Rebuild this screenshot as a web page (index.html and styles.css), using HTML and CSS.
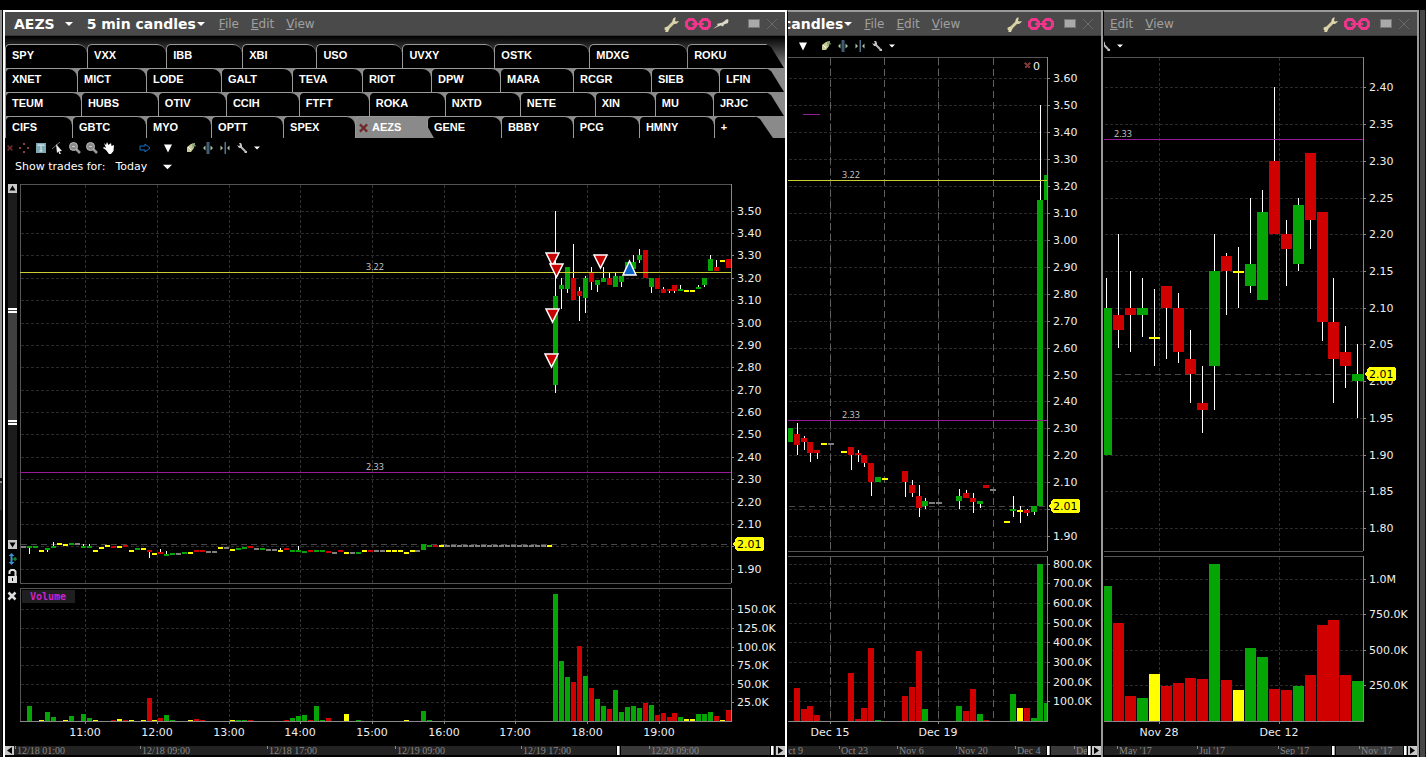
FILE: index.html
```
<!DOCTYPE html>
<html lang="en">
<head>
    <meta charset="UTF-8">
    <meta name="viewport" content="width=device-width, initial-scale=1.0">
    <title>AEZS Charts</title>
    <link rel="stylesheet" href="styles.css">
</head>
<body>
    <!-- Icon sprites -->
    <svg class="sprites" aria-hidden="true">
        <symbol id="caret" viewBox="0 0 8 4"><path d="M0 0h8L4 4z" fill="#fff"/></symbol>
        <symbol id="down" viewBox="0 0 10 9"><path d="M1 1h8L5 9z" fill="#fff"/></symbol>
        <symbol id="wrench" viewBox="0 0 16 16">
            <path d="M1.5 14.5L10 6" stroke="#d8d0a0" stroke-width="3" fill="none"/>
            <path d="M10.5 1.5C8 3 8 6 9.500 7.500c1.500 1 4 .5 5.500-2.500l-3 .5-1-1 .8-3z" fill="#ddd6ac"/>
            <path d="M0 12l3-1.500 2.500 2L4 16H1l1.500-2z" fill="#ddd6ac"/>
        </symbol>
        <symbol id="chain" viewBox="0 0 26 12">
            <g fill="none" stroke="#f0358c" stroke-width="3">
                <path d="M4 1.500h4l2.500 2.500v4L8 10.500H4L1.500 8V4z"/>
                <path d="M18 1.500h4l2.500 2.500v4l-2.500 2.500h-4L15.500 8V4z"/>
                <path d="M7 6h12" stroke-width="2"/>
            </g>
        </symbol>
        <symbol id="pin" viewBox="0 0 16 12">
            <path d="M0 11l5-4-1.500-1 6-1.500L14 1l1.500 1-.5 3-4 1.500-1 2-2-1-3 1z" fill="#ddd8c8"/>
        </symbol>
        <symbol id="restore" viewBox="0 0 12 9"><path d="M0 0h12v9H0z" fill="#777"/><path d="M1 1h10v7H1z" fill="#aaa"/></symbol>
        <symbol id="close" viewBox="0 0 12 12"><path d="M1 1l10 10M11 1L1 11" stroke="#6a6a6a" fill="none"/></symbol>
        <symbol id="redx" viewBox="0 0 10 10"><path d="M1 1l8 8M9 1L1 9" stroke="#6e2a2a" stroke-width="2.500" fill="none"/></symbol>
        <symbol id="dots" viewBox="0 0 10 10"><path d="M4 0h2v2H4zM0 4h2v2H0zM8 4h2v2H8zM4 8h2v2H4z" fill="#8a4040"/></symbol>
        <symbol id="textbox" viewBox="0 0 10 10"><path d="M0 0h10v10H0z" fill="#7fa9b3"/><path d="M2 3V2h6v1M5 2v6M3.500 8h3" stroke="#dfeef2" fill="none"/></symbol>
        <symbol id="draw" viewBox="0 0 12 12"><path d="M0 7l8-7" stroke="#777" fill="none"/><path d="M4 2l6 7-2.500.2L9 12l-1.500.4L6.500 9.500 5 11z" fill="#eee"/></symbol>
        <symbol id="zoom" viewBox="0 0 12 12"><path d="M7 7l4 4" stroke="#999" stroke-width="2.500" fill="none"/><circle cx="4.500" cy="4.500" r="4" fill="#8a8a8a" stroke="#bbb"/><path d="M3 4.500h3" stroke="#ccc" fill="none"/></symbol>
        <symbol id="hand" viewBox="0 0 12 12"><path d="M1 1l2 2 1-3 1.500 3L8 1l.5 3L11 3l-.5 6-2.500 3H6L3 8 0 6l1-1 2 1z" fill="#fff"/></symbol>
        <symbol id="arrow" viewBox="0 0 12 10"><path d="M1 3h5V1l5 4-5 4V7H1z" stroke="#1d6fc4" fill="none"/></symbol>
        <symbol id="leaf" viewBox="0 0 10 10"><path d="M1 4l4-3 4-1-1 5-3 4-4 0z" fill="#c9c99a"/><path d="M6 2l4 1M7 0v5" stroke="#7f9f6a" fill="none"/><path d="M2 4l3 3" stroke="#fff" fill="none"/></symbol>
        <symbol id="widen" viewBox="0 0 10 12"><path d="M3.500 0h3v12h-3z" fill="#3f5d70"/><path d="M0 6l2.500-2.500v5zM10 6L7.500 3.500v5z" fill="#a9c4a4"/></symbol>
        <symbol id="narrow" viewBox="0 0 10 12"><path d="M4.500 0h1.500v12H4.500z" fill="#4f748a"/><path d="M3 6L.5 3.500v5zM7 6l2.500-2.500v5z" fill="#a9c4a4"/></symbol>
        <symbol id="spanner" viewBox="0 0 10 10"><path d="M3 3l5 5" stroke="#bbb" stroke-width="2" fill="none"/><path d="M0 2l2 1 1-1-1-2h2l1 2v2L4 5H2zM10 8L8 7.500 7 9l1 1h2z" fill="#c4c4c4"/></symbol>
        <symbol id="scale" viewBox="0 0 9 12"><path d="M3.500 0l3 3h-2v6h2l-3 3-3-3h2V3h-2z" fill="#3f8fd0"/><path d="M4 6h5M7 4v4" stroke="#1fa84a" fill="none"/></symbol>
        <symbol id="lock" viewBox="0 0 9 14"><path d="M1.500 5V2.500l1.500-1.500h3l1.500 1.500V8" stroke="#ddd" stroke-width="2" fill="none"/><path d="M0 7h9v7H0z" fill="#ddd"/><path d="M4 9h1v3H4z" fill="#000"/></symbol>
        <symbol id="cross" viewBox="0 0 10 10"><path d="M1.500 1.500l7 7M8.500 1.500l-7 7" stroke="#ddd" stroke-width="2.500" fill="none"/></symbol>
    </svg>

    <div class="behind"></div>

    <!-- 5 min chart -->
    <section class="window active">
        <header class="titlebar">
            <button class="title symbol">AEZS <svg class="i-caret"><use href="#caret"/></svg></button>
            <button class="title period">5 min candles<svg class="i-caret"><use href="#caret"/></svg></button>
            <nav class="menu">
                <button><u>F</u>ile</button>
                <button><u>E</u>dit</button>
                <button><u>V</u>iew</button>
            </nav>
            <div class="controls">
                <button aria-label="Settings"><svg class="i-16"><use href="#wrench"/></svg></button>
                <button aria-label="Link"><svg class="i-chain"><use href="#chain"/></svg></button>
                <button class="pin" aria-label="Pin"><svg class="i-pin"><use href="#pin"/></svg></button>
                <button class="restore" aria-label="Restore"><svg class="i-restore"><use href="#restore"/></svg></button>
                <button aria-label="Close"><svg class="i-12"><use href="#close"/></svg></button>
            </div>
        </header>

        <div class="tabs" id="tabs"></div>

        <div class="toolbar">
            <button class="small" aria-label="Remove"><svg class="i-tiny"><use href="#redx"/></svg></button>
            <button aria-label="Crosshair"><svg class="i-10"><use href="#dots"/></svg></button>
            <button aria-label="Text"><svg class="i-10"><use href="#textbox"/></svg></button>
            <button aria-label="Draw"><svg class="i-12"><use href="#draw"/></svg></button>
            <button aria-label="Zoom in"><svg class="i-12"><use href="#zoom"/></svg></button>
            <button aria-label="Zoom out"><svg class="i-12"><use href="#zoom"/></svg></button>
            <button aria-label="Pan"><svg class="i-12"><use href="#hand"/></svg></button>
            <button class="gap-wide" aria-label="Forward"><svg class="i-12"><use href="#arrow"/></svg></button>
            <button class="gap" aria-label="More"><svg class="i-10"><use href="#down"/></svg></button>
            <button class="gap" aria-label="Colors"><svg class="i-10"><use href="#leaf"/></svg></button>
            <button aria-label="Widen bars"><svg class="i-12"><use href="#widen"/></svg></button>
            <button aria-label="Narrow bars"><svg class="i-12"><use href="#narrow"/></svg></button>
            <button aria-label="Tools"><svg class="i-10"><use href="#spanner"/></svg></button>
            <button class="small" aria-label="Tool list"><svg class="i-arrow"><use href="#caret"/></svg></button>
        </div>

        <div class="trades">
            <label for="trades">Show trades for:</label>
            <select id="trades"><option>Today</option></select>
            <svg class="i-drop"><use href="#caret"/></svg>
        </div>

        <div class="workspace">
            <div class="rail">
                <div class="scroller">
                    <button aria-label="Scroll up"><svg viewBox="0 0 9 9"><path d="M1.500 6.500h6l-3-5z"/></svg></button>
                    <div class="track"><div class="thumb"></div></div>
                    <button aria-label="Scroll down"><svg viewBox="0 0 9 9"><path d="M1.500 2.500h6l-3 5z"/></svg></button>
                </div>
                <div class="rail-tools">
                    <button aria-label="Auto scale"><svg class="i-scale"><use href="#scale"/></svg></button>
                    <button aria-label="Lock scale"><svg class="i-lock"><use href="#lock"/></svg></button>
                    <button aria-label="Remove volume"><svg class="i-10"><use href="#cross"/></svg></button>
                </div>
            </div>
            <svg class="chart" id="chart-5min"></svg>
        </div>

        <div class="timebar">
            <button aria-label="Back"><svg viewBox="0 0 9 9"><path d="M7 1v7L2 4.500z"/></svg></button>
            <svg class="timeline" id="time-5min"></svg>
            <button aria-label="Forward"><svg viewBox="0 0 9 9"><path d="M2 1v7l5-3.500z"/></svg></button>
        </div>
    </section>

    <!-- Hourly chart -->
    <section class="window hourly">
        <header class="titlebar">
            <button class="title period">candles<svg class="i-caret"><use href="#caret"/></svg></button>
            <nav class="menu">
                <button><u>F</u>ile</button>
                <button><u>E</u>dit</button>
                <button><u>V</u>iew</button>
            </nav>
            <div class="controls">
                <button aria-label="Settings"><svg class="i-16"><use href="#wrench"/></svg></button>
                <button aria-label="Link"><svg class="i-chain"><use href="#chain"/></svg></button>
                <button class="restore" aria-label="Restore"><svg class="i-restore"><use href="#restore"/></svg></button>
                <button aria-label="Close"><svg class="i-12"><use href="#close"/></svg></button>
            </div>
        </header>
        <div class="toolbar">
            <button aria-label="More"><svg class="i-10"><use href="#down"/></svg></button>
            <button class="gap" aria-label="Colors"><svg class="i-10"><use href="#leaf"/></svg></button>
            <button aria-label="Widen bars"><svg class="i-12"><use href="#widen"/></svg></button>
            <button aria-label="Narrow bars"><svg class="i-12"><use href="#narrow"/></svg></button>
            <button aria-label="Tools"><svg class="i-10"><use href="#spanner"/></svg></button>
            <button class="small" aria-label="Tool list"><svg class="i-arrow"><use href="#caret"/></svg></button>
        </div>
        <div class="workspace">
            <svg class="chart" id="chart-hour"></svg>
        </div>
        <div class="timebar">
            <svg class="timeline" id="time-hour"></svg>
            <button aria-label="Forward"><svg viewBox="0 0 9 9"><path d="M2 1v7l5-3.500z"/></svg></button>
        </div>
    </section>

    <!-- Daily chart -->
    <section class="window daily">
        <header class="titlebar">
            <nav class="menu">
                <button><u>E</u>dit</button>
                <button><u>V</u>iew</button>
            </nav>
            <div class="controls">
                <button aria-label="Settings"><svg class="i-16"><use href="#wrench"/></svg></button>
                <button aria-label="Link"><svg class="i-chain"><use href="#chain"/></svg></button>
                <button class="restore" aria-label="Restore"><svg class="i-restore"><use href="#restore"/></svg></button>
                <button aria-label="Close"><svg class="i-12"><use href="#close"/></svg></button>
            </div>
        </header>
        <div class="toolbar">
            <button aria-label="Tools"><svg class="i-10"><use href="#spanner"/></svg></button>
            <button class="small" aria-label="Tool list"><svg class="i-arrow"><use href="#caret"/></svg></button>
        </div>
        <div class="workspace">
            <svg class="chart" id="chart-day"></svg>
        </div>
        <div class="timebar">
            <svg class="timeline" id="time-day"></svg>
            <button aria-label="Forward"><svg viewBox="0 0 9 9"><path d="M2 1v7l5-3.500z"/></svg></button>
        </div>
    </section>

    <div class="edge"></div>

    <script src="script.js"></script>
</body>
</html>
```
FILE: styles.css
```
* { box-sizing: border-box; }

body {
    display: grid;
    grid-template-columns: 3px minmax(0, 784fr) minmax(0, 316fr) minmax(0, 316fr) 7px;
    min-height: 100vh;
    margin: 0;
    padding-top: 10px;
    background: #000;
    color: #fff;
    font: 11px/14px "DejaVu Sans", Verdana, sans-serif;
}

button, select {
    margin: 0;
    padding: 0;
    border: 0;
    background: none;
    color: inherit;
    font: inherit;
    cursor: pointer;
}
button svg { display: block; }
.sprites { position: absolute; width: 0; height: 0; }

/* Window frames */
.behind {
    border-right: 1px solid #000;
    background: linear-gradient(#8d8d8d 0 468px, #111 468px 471px, #888 471px 473px, #333 473px 500px, #181818 500px);
}
.edge {
    margin-left: 1px;
    border-right: 1px solid #111;
    background: #464646;
}
.window {
    display: flex;
    flex-direction: column;
    min-width: 0;
    padding-bottom: 2px;
    overflow: hidden;
    border-top: 2px solid #999;
    border-right: 2px solid #999;
    border-left: 1px solid #000;
}
.window.active {
    border-color: #fff;
    border-left-width: 2px;
}

/* Title bar */
.titlebar {
    display: flex;
    align-items: center;
    height: 24px;
    border-bottom: 1px solid #383838;
    background: #4a4a4a;
    white-space: nowrap;
}
.title {
    display: flex;
    align-items: center;
    font-size: 14px;
    font-weight: bold;
}
.symbol { gap: 10px; margin-left: 9px; }
.period { gap: 1px; margin-left: 14px; }
.hourly .period { margin-left: -5px; }
.menu {
    display: flex;
    gap: 12px;
    margin-left: 14px;
    color: #a0a0a0;
    font-size: 12px;
}
.hourly .menu { margin-left: 12px; }
.daily .menu { margin-left: 6px; }
.controls {
    display: flex;
    align-items: center;
    gap: 5px;
    margin-left: auto;
    padding-right: 7px;
}
.controls .restore { margin: 0 1px 0 5px; }
.controls .pin { margin-left: -3px; }
.controls .pin + .restore { margin-left: 14px; }

.i-caret { width: 8px; height: 4px; }
.i-arrow { width: 6px; height: 4px; }
.i-drop { width: 9px; height: 6px; }
.i-tiny { width: 6px; height: 6px; }
.i-10 { width: 10px; height: 10px; }
.i-12 { width: 12px; height: 12px; }
.i-16 { width: 16px; height: 16px; }
.i-chain { width: 26px; height: 12px; }
.i-pin { width: 16px; height: 12px; }
.i-restore { width: 12px; height: 9px; }
.i-scale { width: 9px; height: 12px; }
.i-lock { width: 9px; height: 14px; }

/* Ticker tabs */
.tabs {
    padding-top: 8px;
    background: linear-gradient(#000, #888 32px);
}
.tab-row {
    display: flex;
    height: 24px;
    padding-right: 1px;
}
.tab-row + .tab-row { background: #8a8a8a; }
.tab-row:last-child { height: 22px; padding-right: 12px; }
.tab {
    display: flex;
    flex: 1 1 0;
    min-width: 0;
    border-top: 1px solid #999;
    border-left: 1px solid #999;
    border-radius: 5px 9px 0 0;
    background: #000;
    font: bold 11px/13px "Liberation Sans", Arial, sans-serif;
}
.tab span {
    display: flex;
    gap: 4px;
    padding: 4px 0 0 6px;
}
.tab:last-child {
    clip-path: polygon(0 0, calc(100% - 18px) 0, calc(100% - 13px) 3px, 100% 100%, 0 100%);
}
.tab.current {
    z-index: 1;
    margin-right: -7px;
    background: #8a8a8a;
    clip-path: polygon(0 0, calc(100% - 18px) 0, calc(100% - 10px) 4px, 100% 100%, 0 100%);
}
.tab.current span { padding-left: 3px; }
.tab svg { width: 9px; height: 10px; margin-top: 2px; }

/* Toolbars */
.toolbar {
    display: flex;
    align-items: center;
    gap: 5px;
    height: 21px;
    padding: 0 0 2px 1px;
}
.toolbar button {
    display: grid;
    place-items: center;
    width: 12px;
}
.toolbar .small { width: 7px; }
.toolbar .gap { margin-left: 6px; }
.toolbar .gap-wide { margin-left: 19px; }
.hourly .toolbar { padding-left: 9px; }
.daily .toolbar button:first-child { margin-left: -6px; }
.trades {
    display: flex;
    align-items: center;
    height: 25px;
    padding: 0 0 9px 10px;
}
.trades select {
    margin: 0 16px 0 10px;
    appearance: none;
}

/* Charts */
.workspace {
    display: flex;
    flex: 1;
    min-height: 300px;
}
.chart {
    display: block;
    flex: 1;
    min-width: 0;
    height: auto;
}
.chart text { font: 11px "DejaVu Sans", Verdana, sans-serif; fill: #eee; }
.chart .level { font: 9px "Open Sans", Tahoma, sans-serif; fill: #ccc; }
.chart .last { fill: #000; }
.chart .study { font: bold 10px "DejaVu Sans Mono", monospace; fill: #cc22cc; }

.rail {
    display: flex;
    flex-direction: column;
    width: 9px;
    margin: 0 3px;
}
.scroller {
    display: flex;
    flex: 365 1 0;
    flex-direction: column;
}
.scroller button, .timebar button { flex: none; width: 9px; height: 9px; background: #c8c8c8; }
.track {
    display: flex;
    flex: 1;
    align-items: center;
    background: #1c1c1c;
}
.thumb {
    width: 100%;
    height: 34%;
    border-top: 5px double #fff;
    border-bottom: 5px double #fff;
    background: #404040;
}
.rail-tools {
    display: flex;
    flex: 193 1 0;
    flex-direction: column;
    gap: 4px;
    padding-top: 4px;
}
.rail-tools button:last-child { margin-top: 4px; margin-left: -1px; }

.timebar { display: flex; height: 9px; }
.timeline {
    display: block;
    flex: 1;
    min-width: 0;
    height: 9px;
    background: #232323;
}
.timeline text { font: 10px "Liberation Serif", "Times New Roman", serif; fill: #888; }
```
FILE: script.js
```
const COLORS = { g: '#05a505', r: '#d00000', y: '#ffff00', w: '#808080' };
const YELLOW = '#cccc33';
const PURPLE = '#991a99';

// Tab rows: ticker and relative width
const TABS = [
    [['SPY', 82], ['VXX', 79], ['IBB', 76], ['XBI', 74], ['USO', 86], ['UVXY', 92], ['OSTK', 95], ['MDXG', 98], ['ROKU', 97]],
    [['XNET', 72], ['MICT', 69], ['LODE', 75], ['GALT', 71], ['TEVA', 70], ['RIOT', 69], ['DPW', 69], ['MARA', 73], ['RCGR', 78], ['SIEB', 68], ['LFIN', 65]],
    [['TEUM', 76], ['HUBS', 77], ['OTIV', 68], ['CCIH', 73], ['FTFT', 70], ['ROKA', 76], ['NXTD', 75], ['NETE', 75], ['XIN', 60], ['MU', 58], ['JRJC', 71]],
    [['CIFS', 67], ['GBTC', 74], ['MYO', 65], ['OPTT', 72], ['SPEX', 72], ['AEZS', 79], ['GENE', 74], ['BBBY', 72], ['PCG', 66], ['HMNY', 75], ['+', 59]]
];

document.getElementById('tabs').innerHTML = TABS.map(row =>
    '<div class="tab-row">' + row.map(([name, grow]) => {
        const current = name === 'AEZS';
        return `<button class="tab${current ? ' current' : ''}" style="flex-grow:${grow}"><span>` +
            (current ? '<svg><use href="#redx"/></svg>' : '') + `${name}</span></button>`;
    }).join('') + '</div>'
).join('');

// Quiet session bars: color, price, volume (K), wick end
const quiet = [
    ['w', 2.0], ['g', 2.003, 20.6, 1.967], ['g', 2.0], ['y', 1.985, 1.5], ['g', 1.994, 12.5, 1.976], ['g', 2.0, 5.8, 2.021],
    ['y', 2.016], ['y', 2.011, 1.5], ['g', 2.016, 7], ['w', 2.016], ['g', 2.0, 10, 2.011], ['g', 2.0, 4.5, 2.011],
    ['y', 1.985, 1.5], ['y', 1.999], ['y', 2.007], ['r', 2.0, 1.5], ['y', 2.003, 3], ['r', 2.007, 1.5], ['y', 1.985, 1.5, 1.976],
    ['g', 1.994], ['y', 1.994, 1.5], ['r', 1.985, 31, 1.949], ['y', 1.971, 1.5], ['r', 1.976, 4.5, 1.989], ['g', 1.967, 8.5, 1.98],
    ['g', 1.971, 1.5], ['w', 1.971], ['g', 1.976], ['y', 1.976, 1.5], ['r', 1.985, 3], ['r', 1.985, 1.5], ['w', 1.98], ['w', 1.98],
    ['y', 1.999], ['w', 1.999], ['y', 1.99, 1.5], ['g', 1.994, 1.5], ['g', 1.998, 1.5], ['r', 2.0, 1.5], ['w', 1.994], ['g', 1.991],
    ['w', 1.99], ['w', 1.99], ['y', 1.985, 0, 1.994], ['r', 1.994, 1.5], ['g', 1.985, 4.5], ['g', 1.985, 7, 2.003], ['g', 1.98, 8.5],
    ['r', 1.985, 1.5], ['g', 1.985, 20.6, 1.976], ['g', 1.985, 1.5], ['r', 1.98, 4.5], ['w', 1.976], ['r', 1.985], ['y', 1.976, 10],
    ['w', 1.976], ['g', 1.976, 1.5], ['y', 1.985], ['r', 1.985], ['w', 1.985], ['w', 1.985], ['y', 1.985], ['y', 1.985], ['y', 1.985],
    ['y', 1.976, 1.5], ['y', 1.985], ['w', 1.985]
].map(([c, p, vol, wick]) => [c, p, p, Math.max(p, wick || p), Math.min(p, wick || p), vol]);

const flat = Array.from({ length: 17 }, () => ['w', 2.007, 2.007]);

// Candles: color, body top, body bottom, high, low, volume (K)
const fiveMin = quiet.concat([
    ['g', 2.01, 1.985, 0, 0, 14], ['g', 2.007, 2.007, 2.007, 1.999, 1.5], ['r', 2.007, 2.007], ['y', 2.007, 2.007]
], flat, [
    ['y', 2.007, 2.007],
    ['g', 3.12, 2.72, 3.5, 2.685, 171], ['g', 3.17, 3.15, 3.2, 3.06, 81], ['g', 3.25, 3.15, 0, 3.13, 59.6], ['r', 3.2, 3.1, 3.35, 0, 53],
    ['r', 3.14, 3.12, 3.16, 3.005, 101], ['g', 3.2, 3.11, 3.21, 3.045, 61], ['r', 3.22, 3.18, 3.25, 3.145, 45], ['g', 3.19, 3.17, 0, 3.135, 30],
    ['g', 3.2, 3.18, 3.25, 0, 20.6], ['r', 3.2, 3.17, 3.22, 0, 16.6], ['g', 3.21, 3.16, 3.22, 0, 42], ['g', 3.21, 3.18, 0, 3.16, 12.5],
    ['g', 3.27, 3.22, 0, 0, 19], ['g', 3.27, 3.24, 3.3, 0, 20.6], ['g', 3.3, 3.28, 3.33, 3.265, 18], ['r', 3.325, 3.2, 0, 0, 24.6],
    ['g', 3.2, 3.16, 0, 3.13, 22], ['r', 3.2, 3.15, 0, 0, 8.5], ['r', 3.15, 3.13, 3.16, 0, 11], ['r', 3.15, 3.14, 0, 3.13, 6],
    ['r', 3.17, 3.14, 0, 3.13, 11], ['g', 3.15, 3.14, 3.17, 0, 6], ['y', 3.145, 3.145, 0, 0, 3], ['y', 3.145, 3.145, 0, 0, 3],
    ['g', 3.16, 3.15, 3.17, 0, 10], ['g', 3.2, 3.17, 0, 3.16, 10], ['g', 3.285, 3.23, 3.3, 0, 12.5], ['r', 3.25, 3.23, 3.28, 0, 7],
    ['y', 3.28, 3.28, 0, 0, 1.5], ['r', 3.285, 3.245, 0, 0, 15]
]);

const hourly = [
    ['g', 2.3, 2.25], ['r', 2.28, 2.24, 2.32, 2.2, 169], ['r', 2.265, 2.25, 2.27, 2.22, 63], ['r', 2.25, 2.21, 0, 2.175, 78],
    ['r', 2.22, 2.21, 0, 2.185, 32], ['y', 2.245, 2.245], ['w', 2.245, 2.245], null,
    ['y', 2.215, 2.215], ['r', 2.23, 2.2, 0, 2.145, 246], ['r', 2.21, 2.2, 2.22, 2.175, 11], ['r', 2.2, 2.17, 0, 2.155, 68],
    ['r', 2.17, 2.1, 0, 2.05, 373], ['g', 2.12, 2.1, 0, 0, 7], ['y', 2.115, 2.115], null, null,
    ['r', 2.14, 2.1, 0, 2.045, 129], ['r', 2.09, 2.06, 2.11, 2.045, 175], ['r', 2.05, 2.005, 2.09, 1.97, 358],
    ['g', 2.03, 2.01, 2.04, 2.0, 63], ['w', 2.025, 2.025], ['w', 2.025, 2.025], null, null,
    ['g', 2.05, 2.03, 2.075, 2.0, 78], ['r', 2.06, 2.04, 2.07, 0, 52], ['r', 2.04, 2.025, 2.06, 1.985, 164],
    ['g', 2.03, 2.02, 0, 2.005, 37], ['r', 2.09, 2.08, 0, 0, 7], ['w', 2.075, 2.075], null,
    ['y', 1.955, 1.955], ['g', 2.0, 1.995, 2.05, 1.97, 139], ['y', 1.998, 1.998, 2.01, 1.95, 68], ['r', 1.995, 1.985, 2.0, 1.975, 68],
    ['g', 2.01, 1.99, 0, 1.98, 17], ['g', 3.15, 2.01, 3.5, 0, 800], ['g', 3.24, 3.15, 3.3, 3.12, 93]
];

const daily = [
    ['g', 2.1, 1.9, 2.14, 0, 952], ['r', 2.09, 2.07, 2.2, 2.045, 691], ['r', 2.1, 2.09, 2.15, 2.04, 178], ['g', 2.1, 2.09, 2.14, 2.06, 164],
    ['y', 2.06, 2.06, 2.125, 2.02, 333], ['r', 2.13, 2.1, 0, 2.03, 248], ['r', 2.1, 2.04, 2.12, 2.025, 270], ['r', 2.03, 2.01, 2.07, 1.97, 305],
    ['r', 1.97, 1.96, 2.02, 1.93, 298], ['g', 2.15, 2.02, 2.2, 1.96, 1106], ['r', 2.17, 2.15, 2.175, 2.09, 291], ['y', 2.15, 2.15, 2.183, 2.1, 220],
    ['g', 2.16, 2.13, 2.25, 2.12, 516], ['g', 2.23, 2.11, 2.26, 0, 452], ['r', 2.3, 2.2, 2.4, 0, 227], ['r', 2.2, 2.18, 2.22, 2.13, 220],
    ['g', 2.24, 2.16, 2.25, 2.15, 248], ['r', 2.31, 2.22, 0, 2.18, 326], ['r', 2.23, 2.08, 0, 2.055, 677], ['r', 2.08, 2.03, 2.14, 1.97, 712],
    ['r', 2.04, 2.02, 2.075, 1.99, 326], ['g', 2.01, 2.0, 2.05, 1.95, 284]
];

const CHARTS = [
    {
        id: 'chart-5min', bars: fiveMin, axis: 54, plot: 711, height: 562, split: 399, volTop: 404, volBottom: 537, left: true,
        first: 3, step: 5.977, barWidth: 5,
        ref: 3.5, refY: 26.7, perUnit: 223.75, from: 1.9, to: 3.5, tick: 0.1, skip: 2.0,
        volTicks: [25, 50, 75, 100, 125, 150], perK: 0.744,
        times: [[65, '11:00'], [137, '12:00'], [209, '13:00'], [280, '14:00'], [352, '15:00'], [424, '16:00'], [495, '17:00'], [567, '18:00'], [639, '19:00']],
        levels: [[3.224, YELLOW, 346], [2.33, PURPLE, 346]],
        sells: [[532, 68], [536, 79], [532, 124], [531, 169], [580, 70]], buys: [[609, 76]], study: 'Volume'
    },
    {
        id: 'chart-hour', bars: hourly, axis: 54, plot: 259, height: 689, split: 494, volTop: 499, volBottom: 664,
        first: 2, step: 6.77, barWidth: 6,
        ref: 3.6, refY: 21.4, perUnit: 269.2, from: 1.9, to: 3.6, tick: 0.1,
        volTicks: [100, 200, 300, 400, 500, 600, 700, 800], perK: 0.1967,
        times: [[42, 'Dec 15'], [150, 'Dec 19']], sessions: [42, 96, 150, 205],
        levels: [[3.224, YELLOW, 54], [2.33, PURPLE, 54]], note: true
    },
    {
        id: 'chart-day', bars: daily, axis: 54, plot: 259, height: 689, split: 494, volTop: 499, volBottom: 664,
        first: 2.4, step: 11.95, barWidth: 11,
        ref: 2.4, refY: 30.4, perUnit: 734.3, from: 1.8, to: 2.4, tick: 0.05,
        volTicks: [250, 500, 750, 1000], perK: 0.1422,
        times: [[55, 'Nov 28'], [175, 'Dec 12']],
        levels: [[2.33, PURPLE, 10]]
    }
];

const rect = (x, y, w, h, fill) => `<rect x="${x}" y="${y}" width="${w}" height="${h}" fill="${fill}"/>`;
const text = (x, y, str, cls = '', anchor = 'start') => `<text x="${x}" y="${y}" class="${cls}" text-anchor="${anchor}">${str}</text>`;
const dash = (x1, y1, x2, y2, color, pattern) =>
    `<path d="M${x1 + 0.5} ${y1 + 0.5}L${x2 + 0.5} ${y2 + 0.5}" stroke="${color}" stroke-dasharray="${pattern}" fill="none"/>`;

function drawChart(c) {
    const svg = document.getElementById(c.id);
    const box = svg.getBoundingClientRect();
    const kx = (box.width - c.axis) / c.plot;
    const ky = box.height / c.height;
    const X = x => Math.round(x * kx);
    const Y = y => Math.round(y * ky);
    const right = X(c.plot);
    const price = p => Y(c.refY + (c.ref - p) * c.perUnit);
    const vol = k => Y(c.volBottom - k * c.perK);
    const base = Y(c.volBottom);
    let out = '';

    // grid
    for (let p = c.from; p <= c.to + 0.001; p += c.tick) {
        const y = price(p);
        out += dash(0, y, right, y, '#2a2a2a', '3 2') + rect(right, y, 3, 1, '#888');
        if (!c.skip || Math.abs(p - c.skip) > 0.001) out += text(right + 6, y + 4, p.toFixed(2));
    }
    c.volTicks.forEach(k => {
        const y = vol(k);
        out += dash(0, y, right, y, '#2a2a2a', '3 2') + rect(right, y, 3, 1, '#888');
        out += text(right + 6, y + 4, k === 1000 ? '1.0M' : k.toFixed(1) + 'K');
    });
    c.times.forEach(([x, label]) => {
        out += dash(X(x), 0, X(x), Y(c.split), '#303030', '3 2') + dash(X(x), Y(c.volTop), X(x), base, '#303030', '3 2');
        out += rect(X(x), base, 1, 3, '#888') + text(X(x), base + 15, label, '', 'middle');
    });
    (c.sessions || []).forEach(x => {
        out += dash(X(x), 0, X(x), Y(c.split), '#606060', '7 4') + dash(X(x), Y(c.volTop), X(x), base, '#606060', '7 4');
    });

    // last price line
    out += dash(0, price(2.01), right, price(2.01), '#484848', '6 4');

    // candles and volume
    c.bars.forEach((bar, i) => {
        if (!bar) return;
        const [color, top, bottom, high, low, k] = bar;
        const mid = X(c.first + c.step * i);
        const w = Math.max(1, Math.round(c.barWidth * kx));
        const x = Math.max(0, mid - Math.floor(w / 2));
        const width = Math.min(mid - Math.floor(w / 2) + w, right) - x;
        const y1 = price(Math.max(top, high || top));
        const y2 = price(Math.min(bottom, low || bottom));
        if (y2 > y1 && (high || low)) out += rect(mid, y1, 1, y2 - y1, '#fff');
        out += rect(x, price(top), width, Math.max(2, price(bottom) - price(top)), COLORS[color]);
        if (k) out += rect(x, vol(k), width, base - vol(k), COLORS[color]);
    });

    // frames
    out += rect(0, 0, right, 1, '#555') + rect(0, Y(c.split), right, 1, '#555');
    out += rect(0, Y(c.volTop), right, 1, '#555') + rect(0, base, right, 1, '#888');
    out += rect(right, 0, 1, Y(c.split), '#888') + rect(right, Y(c.volTop), 1, base - Y(c.volTop) + 1, '#888');
    if (c.left) out += rect(0, 0, 1, Y(c.split), '#555') + rect(0, Y(c.volTop), 1, base - Y(c.volTop), '#555');

    // horizontal levels
    c.levels.forEach(([p, color, x]) => {
        out += rect(0, price(p), right, 1, color) + text(X(x), price(p) - 2, p.toFixed(2), 'level');
    });

    // executions
    (c.sells || []).forEach(([x, y]) => {
        out += `<path d="M${X(x) - 6} ${Y(y) + 1}h13l-6.5 13z" fill="#c80000" stroke="#fff" stroke-width="1.5" shape-rendering="auto"/>`;
    });
    (c.buys || []).forEach(([x, y]) => {
        out += `<path d="M${X(x) - 6} ${Y(y) + 15}h13l-6.5 -14z" fill="#0a62c8" stroke="#fff" stroke-width="1.5" shape-rendering="auto"/>`;
    });

    if (c.study) out += rect(2, Y(c.volTop) + 2, 53, 13, '#1f1f1f') + text(10, Y(c.volTop) + 12, c.study, 'study');
    if (c.note) {
        out += rect(X(15), Y(57), 17, 1, PURPLE) + text(right - 14, 13, '0');
        out += `<path d="M${right - 22} 6l5 5m0-5l-5 5" stroke="#7a3434" stroke-width="2" fill="none"/>`;
    }

    // last price flag
    const y = price(2.01);
    out += `<path d="M${right + 1} ${y}l3 -3v-2l2 -2h25l2 2v10l-2 2h-25l-2 -2v-2z" fill="#ffff00"/>`;
    out += text(right + 6, y + 4, '2.01', 'last');

    svg.innerHTML = `<g shape-rendering="crispEdges">${out}</g>`;
}

// Scroll strips under the charts
const TIMELINES = [
    { id: 'time-5min', width: 762, range: [603, 759], labels: [[3, '12/18 01:00'], [128, '12/18 09:00'], [255, '12/18 17:00'], [383, '12/19 09:00'], [509, '12/19 17:00'], [637, '12/20 09:00']] },
    { id: 'time-hour', width: 304, range: [259, 302], labels: [[-7, 'Oct 9'], [53, 'Oct 23'], [111, 'Nov 6'], [170, 'Nov 20'], [229, 'Dec 4'], [288, 'Dec']] },
    { id: 'time-day', width: 304, range: [228, 302], labels: [[15, "May '17"], [95, "Jul '17"], [176, "Sep '17"], [257, "Nov '17"]] }
];

function drawTimeline(t) {
    const svg = document.getElementById(t.id);
    const k = svg.getBoundingClientRect().width / t.width;
    const [a, b] = t.range.map(v => Math.round(v * k));
    let out = rect(a, 0, b - a, 9, '#3a3a3a');
    t.labels.forEach(([x, label]) => {
        const lx = Math.round(x * k);
        out += rect(lx - 2, 0, 1, 3, '#888') + text(lx, 8, label);
    });
    [a, b - 2].forEach(x => { out += rect(x - 1, 0, 5, 9, '#000') + rect(x, 0, 2, 9, '#fff') + rect(x + 2, 0, 1, 9, '#999'); });
    svg.innerHTML = out;
}

function render() {
    CHARTS.forEach(drawChart);
    TIMELINES.forEach(drawTimeline);
}

render();
window.addEventListener('resize', render);
```
